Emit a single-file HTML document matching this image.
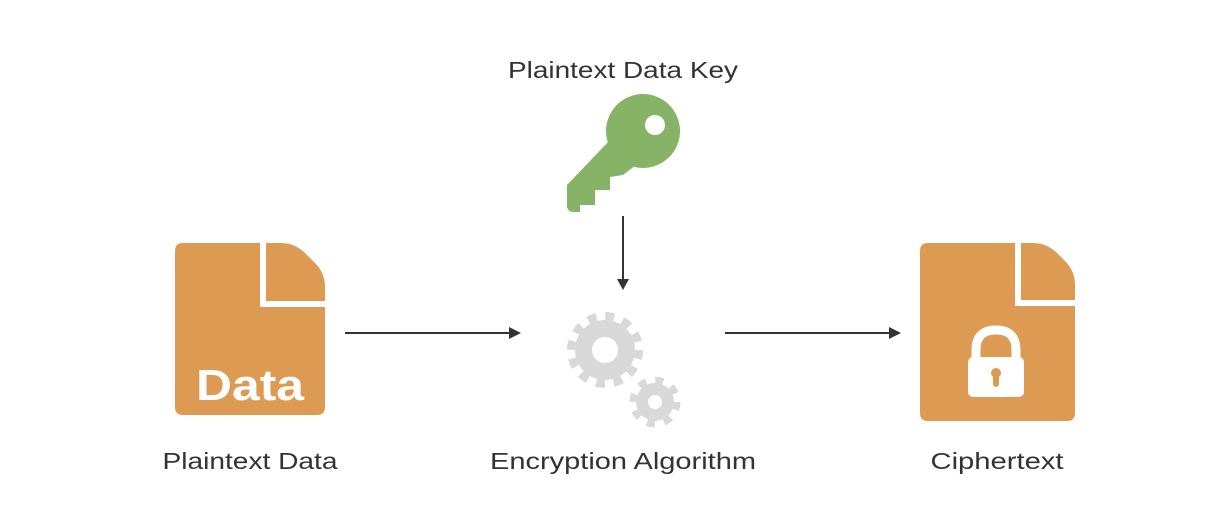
<!DOCTYPE html>
<html><head><meta charset="utf-8"><style>
html,body{margin:0;padding:0;background:#fff;}
svg{display:block;}
text{font-family:"Liberation Sans",sans-serif;fill:#333;font-size:23px;}
</style></head><body>
<svg width="1212" height="508" viewBox="0 0 1212 508" xmlns="http://www.w3.org/2000/svg">
<rect width="1212" height="508" fill="#fff"/>
<text x="623" y="78" text-anchor="middle" textLength="230" lengthAdjust="spacingAndGlyphs">Plaintext Data Key</text>
<text x="250" y="469" text-anchor="middle" textLength="175" lengthAdjust="spacingAndGlyphs">Plaintext Data</text>
<text x="623" y="469" text-anchor="middle" textLength="266" lengthAdjust="spacingAndGlyphs">Encryption Algorithm</text>
<text x="997" y="469" text-anchor="middle" textLength="133" lengthAdjust="spacingAndGlyphs">Ciphertext</text>

<!-- key -->
<g fill="#86b366">
<circle cx="643" cy="131" r="37"/>
<path d="M610,140 L567,185 L567,207 Q568,212 574,212 L580,212 L580,205 L595,205 L595,190 L610,190 L610,177 L623,175 L640,162 Z"/>
</g>
<circle cx="655" cy="125" r="10" fill="#fff"/>

<!-- arrows -->
<g stroke="#333" stroke-width="2" fill="#333">
<line x1="623" y1="216" x2="623" y2="280"/>
<line x1="345" y1="333" x2="510" y2="333"/>
<line x1="725" y1="333" x2="890" y2="333"/>
</g>
<g fill="#333">
<path d="M617,279 L629,279 L623,290 Z"/>
<path d="M509,327 L509,339 L521,333 Z"/>
<path d="M889,327 L889,339 L901,333 Z"/>
</g>

<!-- gears -->
<g fill="#d9d9d9" stroke="#d9d9d9">
<circle cx="605" cy="350" r="30" stroke="none"/>
<circle cx="605" cy="350" r="34" fill="none" stroke-width="8" stroke-dasharray="9 8.8"/>
<circle cx="655" cy="402" r="19" stroke="none"/>
<circle cx="655" cy="402" r="22" fill="none" stroke-width="7" stroke-dasharray="8 9.3"/>
</g>
<circle cx="605" cy="350" r="13" fill="#fff"/>
<circle cx="655" cy="402" r="7" fill="#fff"/>

<!-- data doc -->
<path d="M183,243 L260,243 L260,307 L325,307 L325,407 Q325,415 317,415 L183,415 Q175,415 175,407 L175,251 Q175,243 183,243 Z" fill="#dd9a52"/>
<path d="M266,243 L280,243 Q295,243 305,253 L315,263 Q325,273 325,287 L325,301 L266,301 Z" fill="#dd9a52"/>
<text x="250" y="400" text-anchor="middle" style="font-size:44px;font-weight:bold;fill:#fff" textLength="108" lengthAdjust="spacingAndGlyphs">Data</text>

<!-- cipher doc -->
<path d="M928,243 L1015,243 L1015,306 L1075,306 L1075,413 Q1075,421 1067,421 L928,421 Q920,421 920,413 L920,251 Q920,243 928,243 Z" fill="#dd9a52"/>
<path d="M1021,243 L1032,243 Q1047,243 1057,253 L1065,261 Q1075,271 1075,285 L1075,300 L1021,300 Z" fill="#dd9a52"/>
<path d="M976,358 L976,350 Q976,330 996,330 Q1016,330 1016,350 L1016,358" fill="none" stroke="#fff" stroke-width="9"/>
<rect x="968" y="357" width="56" height="40" rx="5" fill="#fff"/>
<circle cx="996" cy="373" r="5" fill="#dd9a52"/>
<rect x="993" y="374" width="6" height="13" rx="3" fill="#dd9a52"/>
</svg>
</body></html>
